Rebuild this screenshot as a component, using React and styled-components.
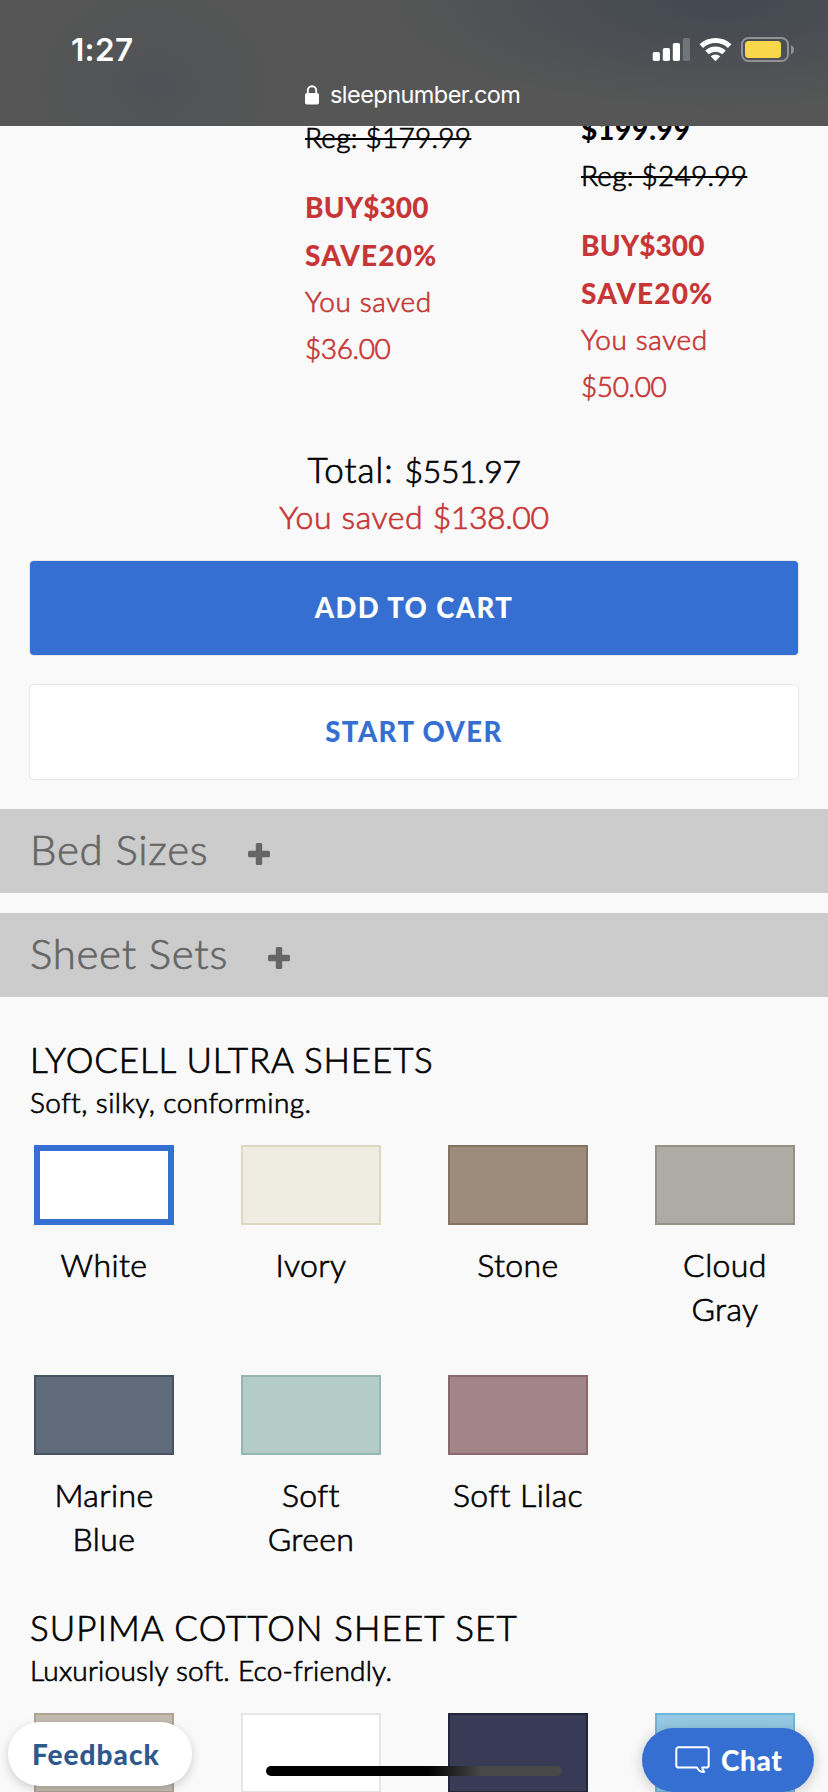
import React from 'react';
import styled, { createGlobalStyle } from 'styled-components';

const GlobalStyle = createGlobalStyle`
  * {
    box-sizing: border-box;
  }

  body {
    margin: 0;
    background: #f9f9f9;
  }
`;

const Page = styled.div`
  position: relative;
  display: flex;
  flex-direction: column;
  width: 828px;
  height: 1792px;
  overflow: hidden;
  background: #f9f9f9;
  color: #000;
  font-family: Lato, 'Open Sans', sans-serif;
  font-weight: 300;
  -webkit-text-stroke: 0.7px currentColor;
`;

const BrowserHeader = styled.header`
  flex: none;
  height: 126px;
  background:
    radial-gradient(ellipse 330px 110px at 720px 0, #434852 0%, rgba(67, 72, 82, 0) 100%),
    radial-gradient(ellipse 120px 100px at 155px 85px, #505257 0%, rgba(80, 82, 87, 0) 100%),
    #555655;
  color: #fff;
  font-family: Inter, 'Liberation Sans', sans-serif;
  -webkit-text-stroke: 0;
`;

const StatusRow = styled.div`
  display: flex;
  justify-content: space-between;
  height: 76px;
  padding: 30px 33px 0 71px;
`;

const StatusIconsWrap = styled.div`
  padding-top: 6px;
`;

const Time = styled.div`
  font-size: 31.5px;
  font-weight: 600;
  line-height: 40px;
  letter-spacing: 0.3px;
`;

const AddressRow = styled.div`
  display: flex;
  align-items: center;
  padding-left: 305px;
  gap: 11px;
  font-size: 23.5px;
  font-weight: 400;
  line-height: 38px;
  letter-spacing: -0.55px;
`;

const Main = styled.main`
  flex: 1;
  overflow: hidden;
`;

const Prices = styled.section`
  display: grid;
  grid-template-columns: 276px 247px;
  align-items: start;
  height: 320px;
  padding-left: 305px;
`;

const PriceColumn = styled.div`
  display: flex;
  flex-direction: column;
  margin-top: ${({ $shift }) => $shift}px;
  font-size: 28px;
  line-height: 48px;
`;

const SalePrice = styled.strong`
  font-weight: 900;
  line-height: 53px;
  letter-spacing: 0.8px;
  -webkit-text-stroke: 0;
`;

const RegularPrice = styled.s`
  align-self: flex-start;
  margin-bottom: 27px;
  line-height: 38px;
  letter-spacing: 0.25px;
  text-decoration-thickness: 2px;
`;

const Promo = styled.strong`
  color: #c73636;
  font-weight: 900;
  letter-spacing: ${({ $spacing }) => $spacing}px;
  -webkit-text-stroke: 0;
`;

const Saved = styled.span`
  color: #c73636;
  letter-spacing: 0.6px;
  line-height: ${({ $height }) => $height}px;
`;

const Amount = styled.span`
  letter-spacing: -0.4px;
`;

const Totals = styled.section`
  display: flex;
  flex-direction: column;
  align-items: center;
  font-size: 32px;
  line-height: 47px;
`;

const TotalLine = styled.div`
  display: flex;
  align-items: baseline;
  height: 47px;
  gap: 11px;
`;

const TotalLabel = styled.span`
  font-size: 35px;
  letter-spacing: 1px;
`;

const Actions = styled.div`
  display: flex;
  flex-direction: column;
  gap: 28px;
  padding: 20px 29px 29px;
`;

const Button = styled.button`
  height: 96px;
  padding: 0 0 2px;
  border: 1px solid #e6e6e6;
  border-radius: 4px;
  background: ${({ $primary }) => ($primary ? '#356fd1' : '#fff')};
  background-clip: padding-box;
  color: ${({ $primary }) => ($primary ? '#fff' : '#356fd1')};
  font-family: inherit;
  font-size: 27.5px;
  font-weight: 900;
  letter-spacing: 1.4px;
  -webkit-text-stroke: 0;
`;

const Accordion = styled.div`
  display: flex;
  flex-direction: column;
  gap: 20px;
`;

const AccordionBar = styled.div`
  display: flex;
  align-items: center;
  gap: 40px;
  height: 84px;
  padding: 0 30px 4px;
  background: #ccc;
  color: #666;
  font-size: 42px;
  letter-spacing: 0.7px;
`;

const PlusIcon = styled.svg`
  width: 22px;
  height: 22px;
  margin-top: 10px;
  fill: #666;
`;

const SheetTitle = styled.h2`
  margin: ${({ $top }) => $top}px 0 0 30px;
  font-size: 35px;
  font-weight: 300;
  line-height: 43px;
  letter-spacing: ${({ $spacing }) => $spacing}px;
`;

const SheetText = styled.p`
  margin: 0 0 22px 30px;
  font-size: 28px;
  line-height: 42px;
  letter-spacing: ${({ $spacing }) => $spacing}px;
`;

const SwatchGrid = styled.div`
  display: grid;
  grid-template-columns: repeat(4, 140px);
  grid-auto-rows: 185px;
  gap: 45px 67px;
  padding-left: 34px;
`;

const SwatchItem = styled.div`
  display: flex;
  flex-direction: column;
  gap: 18px;
  font-size: 32px;
  line-height: 44px;
  letter-spacing: 0.4px;
  text-align: center;
`;

const Swatch = styled.div`
  flex: none;
  height: 80px;
  border: ${({ $selected }) => ($selected ? 6 : 2)}px solid ${({ $border }) => $border};
  background: ${({ $color }) => $color};
`;

const Pill = styled.button`
  position: absolute;
  display: flex;
  align-items: center;
  border: 0;
  border-radius: 32px;
  font-family: inherit;
  font-size: 28px;
  font-weight: 900;
  -webkit-text-stroke: 0;
`;

const FeedbackButton = styled(Pill)`
  left: 8px;
  top: 1722px;
  width: 184px;
  height: 64px;
  padding: 0 0 1px 24px;
  background: #fff;
  box-shadow: 0 3px 10px rgba(0, 0, 0, 0.18);
  color: #2f588c;
  letter-spacing: 1px;
`;

const ChatButton = styled(Pill)`
  left: 642px;
  top: 1728px;
  width: 172px;
  height: 64px;
  padding: 0 0 0 33px;
  gap: 11px;
  background: #356fd1;
  box-shadow: 0 2px 14px rgba(0, 0, 0, 0.2);
  color: #fff;
  letter-spacing: 0.6px;
`;

const HomeIndicator = styled.div`
  position: absolute;
  left: 266px;
  top: 1766px;
  width: 296px;
  height: 10px;
  border-radius: 5px;
  background: linear-gradient(90deg, #000 0, #000 162px, #484848 215px);
`;

const lyocellColors = [
  { name: 'White', color: '#fff', border: '#356fd1', selected: true },
  { name: 'Ivory', color: '#efede1', border: '#dcd9c0' },
  { name: 'Stone', color: '#9d8c7c', border: '#857260' },
  { name: 'Cloud Gray', color: '#aeaba4', border: '#949187' },
  { name: 'Marine Blue', color: '#606c7b', border: '#475361' },
  { name: 'Soft Green', color: '#b4ccc8', border: '#94b8af' },
  { name: 'Soft Lilac', color: '#a18589', border: '#8a686e' }
];

const supimaColors = [
  { color: '#c3bbb0', border: '#aca393' },
  { color: '#fff', border: '#e5e5e5' },
  { color: '#373b55', border: '#222638' },
  { color: '#95c9e4', border: '#6db6dc' }
];

const StatusIcons = () => (
  <svg width="144" height="28" viewBox="651 36 144 28">
    <g fill="#fff">
      <rect x="652.7" y="52" width="7.2" height="9" rx="1.8" />
      <rect x="662.8" y="48" width="7.2" height="13" rx="1.8" />
      <rect x="672.8" y="43" width="7.2" height="18" rx="1.8" />
      <rect x="682.8" y="38" width="7.2" height="23" rx="1.8" opacity="0.22" />
    </g>
    <g fill="none" stroke="#fff" strokeWidth="5.2">
      <path d="M701.3 46.1a20.8 20.8 0 0 1 28.4 0" />
      <path d="M707 52.4a12.8 12.8 0 0 1 17 0" />
    </g>
    <path d="M715.5 61.2l-4.8-5a7.4 7.4 0 0 1 9.6 0z" fill="#fff" />
    <rect x="742" y="38" width="46" height="23" rx="6.5" fill="none" stroke="#909296" strokeWidth="2" />
    <path d="M791 45.3c4 1.4 4 7.6 0 9z" fill="#909296" />
    <rect x="745" y="41" width="36" height="17" rx="3.5" fill="#f8d74a" />
  </svg>
);

const LockIcon = () => (
  <svg width="14" height="20" viewBox="0 0 14 20">
    <rect y="8" width="14" height="11.5" rx="2" fill="#fff" />
    <path d="M2.8 9V5.5a4.2 4.2 0 0 1 8.4 0V9" fill="none" stroke="#fff" strokeWidth="1.9" />
  </svg>
);

const Plus = () => (
  <PlusIcon viewBox="0 0 22 22">
    <rect x="7.8" width="6.4" height="22" rx="1.5" />
    <rect y="7.8" width="22" height="6.4" rx="1.5" />
  </PlusIcon>
);

const ChatIcon = () => (
  <svg width="35" height="28" viewBox="0 0 35 28">
    <path
      d="M3.5 1.2h28a2.2 2.2 0 0 1 2.2 2.2v16a2.2 2.2 0 0 1-2.2 2.2h-4.2c0 1.8.6 3.2 2 4.2-3.4.6-5.8-1.4-7.3-4.2H3.5a2.2 2.2 0 0 1-2.2-2.2v-16a2.2 2.2 0 0 1 2.2-2.2z"
      fill="none"
      stroke="#fff"
      strokeWidth="2"
      strokeLinejoin="round"
    />
  </svg>
);

const Swatches = ({ items }) => (
  <SwatchGrid>
    {items.map(({ name, color, border, selected }) => (
      <SwatchItem key={color}>
        <Swatch $color={color} $border={border} $selected={selected} />
        {name && <div>{name}</div>}
      </SwatchItem>
    ))}
  </SwatchGrid>
);

const Discount = ({ amount }) => (
  <>
    <Promo $spacing={0.1}>BUY$300</Promo>
    <Promo $spacing={1.15}>SAVE20%</Promo>
    <Saved $height={45}>You saved</Saved>
    <Saved $height={48}>
      <Amount>{amount}</Amount>
    </Saved>
  </>
);

const App = () => (
  <>
    <GlobalStyle />
    <Page>
      <BrowserHeader>
        <StatusRow>
          <Time>1:27</Time>
          <StatusIconsWrap>
            <StatusIcons />
          </StatusIconsWrap>
        </StatusRow>
        <AddressRow>
          <LockIcon />
          <span>sleepnumber.com</span>
        </AddressRow>
      </BrowserHeader>
      <Main>
        <Prices>
          <PriceColumn $shift={-8}>
            <RegularPrice>Reg: $179.99</RegularPrice>
            <Discount amount="$36.00" />
          </PriceColumn>
          <PriceColumn $shift={-23}>
            <SalePrice>$199.99</SalePrice>
            <RegularPrice>Reg: $249.99</RegularPrice>
            <Discount amount="$50.00" />
          </PriceColumn>
        </Prices>
        <Totals>
          <TotalLine>
            <TotalLabel>Total:</TotalLabel>
            <Amount>$551.97</Amount>
          </TotalLine>
          <Saved $height={47}>
            You saved <Amount>$138.00</Amount>
          </Saved>
        </Totals>
        <Actions>
          <Button $primary>ADD TO CART</Button>
          <Button>START OVER</Button>
        </Actions>
        <Accordion>
          <AccordionBar>
            Bed Sizes
            <Plus />
          </AccordionBar>
          <AccordionBar>
            Sheet Sets
            <Plus />
          </AccordionBar>
        </Accordion>
        <SheetTitle $top={41} $spacing={0.85}>
          LYOCELL ULTRA SHEETS
        </SheetTitle>
        <SheetText $spacing={0.45}>Soft, silky, conforming.</SheetText>
        <Swatches items={lyocellColors} />
        <SheetTitle $top={46} $spacing={1.1}>
          SUPIMA COTTON SHEET SET
        </SheetTitle>
        <SheetText $spacing={0.23}>Luxuriously soft. Eco-friendly.</SheetText>
        <Swatches items={supimaColors} />
      </Main>
      <FeedbackButton>Feedback</FeedbackButton>
      <ChatButton>
        <ChatIcon />
        Chat
      </ChatButton>
      <HomeIndicator />
    </Page>
  </>
);

export default App;
